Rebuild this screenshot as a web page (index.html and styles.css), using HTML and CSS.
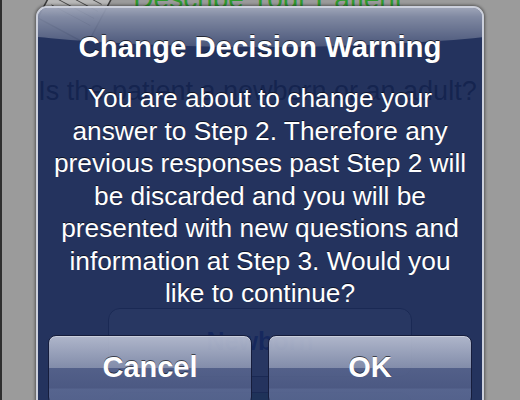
FILE: index.html
```html
<!DOCTYPE html>
<html>
<head>
<meta charset="utf-8">
<link rel="stylesheet" href="styles.css">
</head>
<body>
<div class="screen">
  <svg class="notepad" width="90" height="60" viewBox="0 0 90 60">
    <g transform="rotate(28 45 30)" fill="none" stroke="#3a3a3a" stroke-width="1.5">
      <rect x="18" y="-20" width="56" height="70" rx="2" fill="#b8b8b8"/>
      <line x1="24" y1="0" x2="68" y2="0" stroke-width="0.8"/>
      <line x1="24" y1="8" x2="68" y2="8" stroke-width="0.8"/>
      <line x1="24" y1="16" x2="68" y2="16" stroke-width="0.8"/>
      <line x1="24" y1="24" x2="68" y2="24" stroke-width="0.8"/>
      <line x1="24" y1="32" x2="68" y2="32" stroke-width="0.8"/>
    </g>
  </svg>
  <h1 class="page-title">Describe Your Patient</h1>
  <p class="question">Is the patient a newborn or an adult?</p>
  <div class="choices">
    <div class="choice">Newborn</div>
    <div class="choice choice-adult">Adult</div>
  </div>
</div>
<div class="alert">
  <h2 class="alert-title">Change Decision Warning</h2>
  <p class="alert-body">You are about to change your answer to Step 2. Therefore any previous responses past Step 2 will be discarded and you will be presented with new questions and information at Step 3. Would you like to continue?</p>
  <div class="alert-buttons">
    <button class="alert-btn">Cancel</button>
    <button class="alert-btn">OK</button>
  </div>
</div>
</body>
</html>
```
FILE: styles.css
```css
html, body {
  margin: 0;
  padding: 0;
}
body {
  width: 520px;
  height: 400px;
  overflow: hidden;
  background: #9b9b9b;
  font-family: "Liberation Sans", Arial, sans-serif;
  position: relative;
  box-shadow: inset 2px 0 0 #2e2e2e;
}
.screen {
  display: flex;
  flex-direction: column;
  align-items: center;
  margin-top: -17px;
  position: relative;
}
.notepad {
  position: absolute;
  left: 26px;
  top: 0px;
}
.page-title {
  margin: 0;
  font-weight: normal;
  font-size: 28px;
  line-height: 32px;
  color: #2f9a2f;
  padding-left: 16px;
  position: relative;
}
.question {
  margin: 60px 0 0;
  font-size: 27px;
  line-height: 32px;
  color: #000;
  padding-right: 5px;
}
.choices {
  margin-top: 201px;
  display: flex;
  flex-direction: column;
  gap: 15px;
}
.choice {
  width: 304px;
  height: 69px;
  box-sizing: border-box;
  border: 1px solid #333;
  border-radius: 12px;
  background: #c4c4c4;
  display: flex;
  align-items: center;
  justify-content: center;
  font-weight: bold;
  font-size: 25px;
  color: #0c2a90;
  padding-bottom: 2px;
}
.choice-adult {
  background: #5a8a6a;
}
.alert {
  position: absolute;
  left: 36px;
  top: 6px;
  width: 448px;
  height: 430px;
  box-sizing: border-box;
  border: 2px solid #ccd0dc;
  border-radius: 11px;
  background: rgba(23, 40, 88, 0.9);
  box-shadow: 0 0 3px 1px rgba(0, 0, 0, 0.45);
  overflow: hidden;
  display: flex;
  flex-direction: column;
  align-items: center;
  padding-top: 22px;
}
.alert::before {
  content: "";
  position: absolute;
  left: -224px;
  width: 896px;
  top: -111px;
  height: 150px;
  border-radius: 50%;
  background: linear-gradient(to bottom, rgba(255,255,255,0.64) 70%, rgba(255,255,255,0.42) 80%, rgba(255,255,255,0.17) 100%);
  z-index: 0;
}
.alert > * {
  position: relative;
  z-index: 1;
}
.alert-title {
  margin: 0;
  font-size: 29.4px;
  line-height: 34px;
  font-weight: bold;
  color: #fff;
  text-shadow: 0 -1px 0 rgba(0, 0, 0, 0.6);
}
.alert-body {
  margin: 18px 0 0;
  width: 426px;
  text-align: center;
  font-size: 26.3px;
  line-height: 32.5px;
  color: #fff;
  text-shadow: 0 -1px 0 rgba(0, 0, 0, 0.6);
}
.alert-buttons {
  margin-top: 25.5px;
  display: flex;
  gap: 16px;
  padding: 0 10px;
}
.alert-btn {
  width: 204px;
  height: 70px;
  box-sizing: border-box;
  border: 1px solid #161d3c;
  border-radius: 8px;
  background: linear-gradient(to bottom,
    rgba(190, 196, 214, 0.9) 0px,
    rgba(140, 150, 178, 0.9) 32px,
    rgba(88, 101, 142, 0.9) 32px,
    rgba(80, 93, 135, 0.9) 52px,
    rgba(92, 106, 148, 0.9) 53px,
    rgba(88, 102, 144, 0.9) 100%);
  box-shadow: inset 0 1px 0 rgba(255, 255, 255, 0.35);
  font-family: "Liberation Sans", Arial, sans-serif;
  font-weight: bold;
  font-size: 29px;
  color: #fff;
  text-shadow: 0 -1px 0 rgba(0, 0, 0, 0.6);
  padding: 0 0 6px;
  display: flex;
  align-items: center;
  justify-content: center;
}
```
